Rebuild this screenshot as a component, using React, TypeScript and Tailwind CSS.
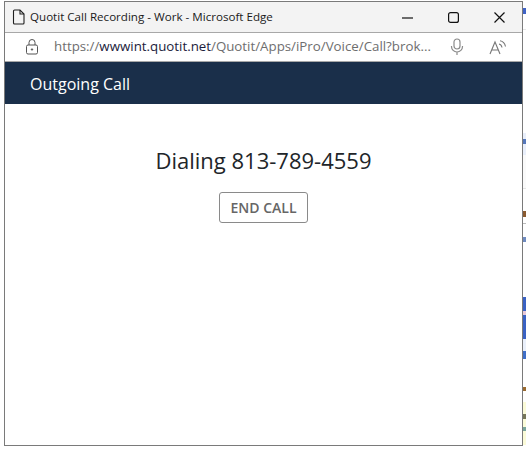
import React from 'react';

const ui = { fontFamily: '"Open Sans", "Noto Sans", sans-serif' };

// slivers of the page behind the popup, top to bottom
const sliver = [
  'h-[8px]',
  'h-[6px] bg-[#3f63c6]',
  'h-[15px]',
  'h-[1px] bg-[#e6e6e6]',
  'h-[103px]',
  'h-[6px] bg-[#e9effb]',
  'h-[5px] bg-[#5577bb]',
  'h-[11px] bg-[#e9effb]',
  'h-[33px] bg-[#fafafa]',
  'h-[1px] bg-[#e4e4e4]',
  'h-[22px]',
  'h-[6px] bg-[#8a5a30]',
  'h-[6px]',
  'h-[1px] bg-[#bbbbbb]',
  'h-[13px]',
  'h-[5px] bg-[#6f8bc0]',
  'h-[55px]',
  'h-[14px] bg-[#3a62c4]',
  'h-[4px] bg-[#e8c8d8]',
  'h-[24px] bg-[#3a62c4]',
  'h-[12px] bg-[#eaf0fb]',
  'h-[8px] bg-[#3f6fc8]',
  'h-[28px]',
  'h-[4px] bg-[#9a6a30]',
  'h-[11px]',
  'h-[12px] bg-[#fbfbd8]',
  'h-[5px] bg-[#77775a]',
  'h-[8px] bg-[#fbfbd8]',
  'h-[4px] bg-[#7aa59a]',
  'h-[14px] bg-[#fbfbd8]',
];

const FileIcon = () => (
  <svg width="14" height="16" viewBox="0 0 14 16" fill="none" stroke="#1f1f1f" strokeWidth="1.1">
    <path d="M2.5 1h5.500l4 4v9a1 1 0 0 1-1 1h-8.500a1 1 0 0 1-1-1v-12a1 1 0 0 1 1-1z" />
    <path d="M8 1v4h4" />
  </svg>
);

const LockIcon = () => (
  <svg width="14" height="16" viewBox="0 0 14 16" fill="none" stroke="#555" strokeWidth="1">
    <rect x="1.500" y="6" width="11" height="9" rx="1.500" />
    <path d="M4 6v-2.500a3 3 0 0 1 6 0v2.500" />
    <circle cx="7" cy="10.500" r="0.700" fill="#555" />
  </svg>
);

const MicIcon = () => (
  <svg width="14" height="18" viewBox="0 0 14 18" fill="none" stroke="#8a8a8a" strokeWidth="1.200">
    <rect x="4" y="1" width="6" height="10" rx="3" />
    <path d="M1.500 8v.5a5.500 5.500 0 0 0 11 0v-.5M7 14v3" />
  </svg>
);

const ReadAloudIcon = () => (
  <svg width="18" height="16" viewBox="0 0 18 16" fill="none" stroke="#777" strokeWidth="1.100">
    <path d="M1 15l5-12 5 12M3 11h6" />
    <path d="M10 5q2.500 .5 3 3.500M11 1.800q4.500 .7 5.500 5.700" />
  </svg>
);

const WindowButtons = () => (
  <div className="flex items-center gap-[35px] pr-[17px]">
    <svg width="11" height="11" viewBox="0 0 11 11" stroke="#111" strokeWidth="1.200"><path d="M0 6h11" /></svg>
    <svg width="11" height="11" viewBox="0 0 11 11" fill="none" stroke="#111" strokeWidth="1.200"><rect x="0.600" y="0.600" width="9.800" height="9.800" rx="2" /></svg>
    <svg width="11" height="11" viewBox="0 0 11 11" stroke="#111" strokeWidth="1.200"><path d="M0.500 0.500l10 10M10.500 0.500l-10 10" /></svg>
  </div>
);

export default function App() {
  return (
    <div className="flex h-[449px] w-[526px] bg-white overflow-hidden" style={ui}>
      <div className="ml-[4px] mt-[1px] flex h-[445px] w-[519px] flex-col border border-[#7a7a7a] bg-white">
        <div className="flex h-[30px] items-center justify-between bg-[#f3f3f3]">
          <div className="flex items-center gap-[4px] pl-[7px]">
            <FileIcon />
            <span className="text-[11.6px] text-[#1a1a1a]">Quotit Call Recording - Work - Microsoft Edge</span>
          </div>
          <WindowButtons />
        </div>
        <div className="flex h-[30px] items-center justify-between border-y border-[#a8a8a8] bg-white pl-[20px] pr-[15px]">
          <div className="flex items-center gap-[15px]">
            <LockIcon />
            <span className="text-[13.3px] text-[#6e6e6e]">
              https://<span className="text-[#1c1c3c]">wwwint.quotit.net</span>/Quotit/Apps/iPro/Voice/Call?brok...
            </span>
          </div>
          <div className="flex items-center gap-[25px]">
            <MicIcon />
            <ReadAloudIcon />
          </div>
        </div>
        <div className="flex h-[42px] items-center bg-[#1a2f4a] pl-[25px] pt-[1px]">
          <span className="text-[16px] text-white">Outgoing Call</span>
        </div>
        <div className="flex flex-col items-center pt-[39px]">
          <h1 className="text-[22px] leading-[34px] text-[#212529]">Dialing 813-789-4559</h1>
          <button className="mt-[15px] h-[31px] w-[89px] rounded-[3px] border border-[#8a8a8a] bg-white text-[14px] font-semibold text-[#666]">
            END CALL
          </button>
        </div>
      </div>
      <div className="flex w-[3px] flex-col">
        {sliver.map((c, i) => (
          <div key={i} className={c} />
        ))}
      </div>
    </div>
  );
}
